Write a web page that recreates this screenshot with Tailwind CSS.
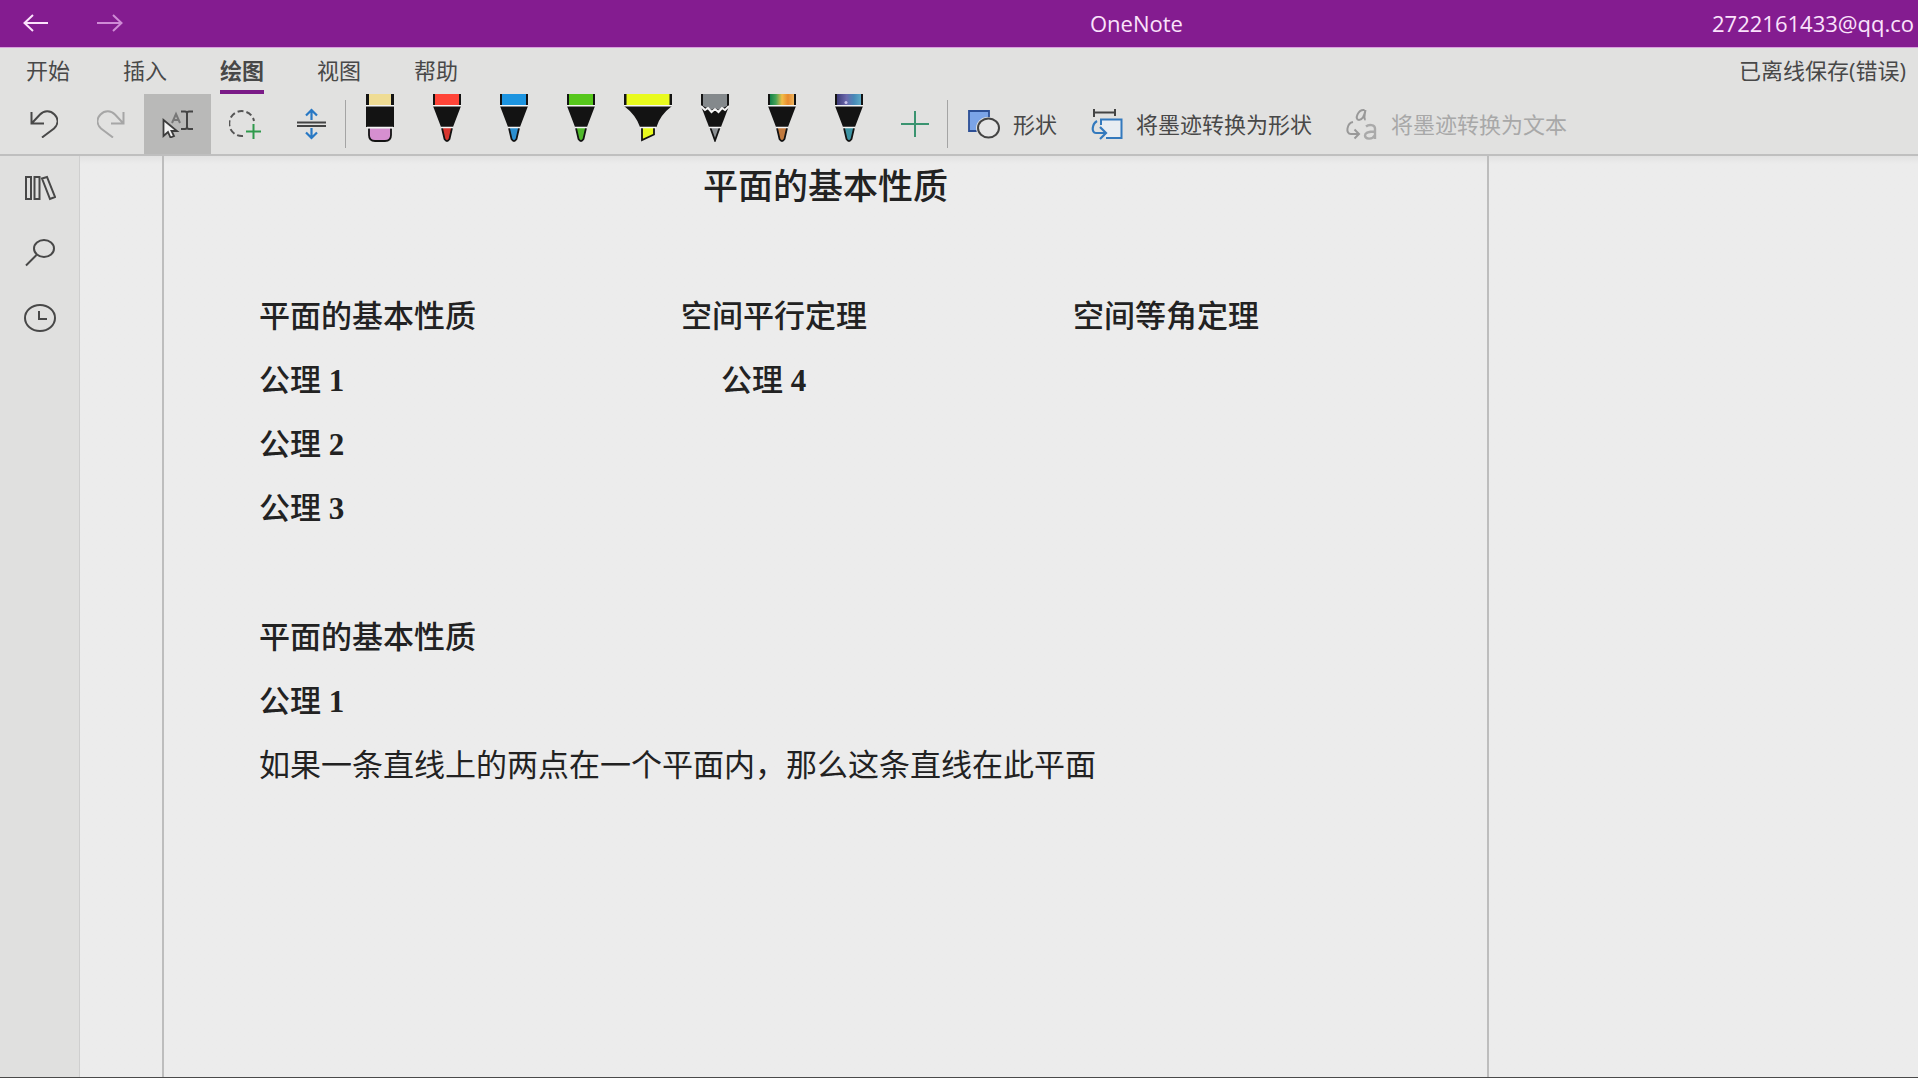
<!DOCTYPE html>
<html lang="zh-CN">
<head>
<meta charset="utf-8">
<title>OneNote</title>
<script src="https://cdn.jsdelivr.net/npm/@tailwindcss/browser@4"></script>
</head>
<body class="flex min-h-screen flex-col overflow-x-hidden bg-[#ececec] font-['Open_Sans','Noto_Sans_CJK_SC',sans-serif] text-[22px] text-[#484848]">

<header class="flex h-12 shrink-0 items-center border-b border-[#d9a0de] bg-[#841c90] pb-[2px] text-[#fbe3fc]">
  <div class="flex w-[1090px] shrink-0 items-center gap-12 pl-[23px]">
    <button aria-label="后退"><svg class="h-5 w-[26px]" viewBox="0 0 26 20" fill="none" stroke="currentColor" stroke-width="2"><path d="M25 10H1.500M10 2L1.500 10L10 18"/></svg></button>
    <button aria-label="前进" class="text-[#cf8bd6]"><svg class="h-5 w-[26px]" viewBox="0 0 26 20" fill="none" stroke="currentColor" stroke-width="2"><path d="M0 10H24.500M16 2L24.500 10L16 18"/></svg></button>
  </div>
  <h1 class="leading-8">OneNote</h1>
  <a href="#" class="mr-1 ml-auto leading-8 whitespace-nowrap">2722161433@qq.co</a>
</header>

<section class="shrink-0 border-b-2 border-[#bfbfbf] bg-[#e1e1e0]">
  <div class="flex h-[46px] items-stretch justify-between pr-3 pl-[26px]">
    <nav class="flex gap-[53px] leading-[44px]">
      <a href="#">开始</a>
      <a href="#">插入</a>
      <a href="#" class="border-b-4 border-[#7a1b87] font-bold">绘图</a>
      <a href="#">视图</a>
      <a href="#">帮助</a>
    </nav>
    <span class="leading-[44px]">已离线保存(错误)</span>
  </div>

  <div class="flex h-[60px] items-center pl-[10px]">
    <button aria-label="撤消" class="flex h-full w-[67px] items-center justify-center"><svg class="h-7 w-7" viewBox="0 0 28 28" fill="none" stroke="#484848" stroke-width="2"><path d="M1.500 2v11.500H14M2 13L10 4.500C14 .5 20 0 24.500 4.500S28 14.500 24 18.500L12 27.500"/></svg></button>
    <button aria-label="恢复" class="flex h-full w-[67px] items-center justify-center"><svg class="h-7 w-7" viewBox="0 0 28 28" fill="none" stroke="#a6a6a6" stroke-width="2"><path d="M26.500 2v11.500H14M26 13L18 4.500C14 .5 8 0 3.500 4.500S0 14.500 4 18.500L16 27.500"/></svg></button>
    <button aria-label="选择对象或键入文本" class="flex h-full w-[67px] items-center justify-center bg-[#b9b9b8]"><svg class="h-7 w-8" viewBox="0 0 32 28" fill="none"><path d="M19 1.500h4q2 0 2 2V17q0 2-2 2h-4M31 1.500h-4q-2 0-2 2V17q0 2 2 2h4" stroke="#444" stroke-width="2"/><path d="M10 13L14 4L18 13M11.500 10h5" stroke="#777" stroke-width="2"/><path d="M1.500 10v16L6 22l2.500 5.500 3.500-1.500L9.500 21H15z" fill="#f2f2f2" stroke="#3c3c3c" stroke-width="1.800"/></svg></button>
    <button aria-label="套索选择" class="flex h-full w-[67px] items-center justify-center"><svg class="h-8 w-8" viewBox="0 0 32 32" fill="none"><path d="M14 28A12.500 12.500 0 1 1 25 13" stroke="#555" stroke-width="2" stroke-dasharray="6 3"/><path d="M17 23.500h15M24.500 16v15" stroke="#2f9a4c" stroke-width="2"/></svg></button>
    <button aria-label="插入空间" class="flex h-full w-[67px] items-center justify-center"><svg class="h-8 w-8" viewBox="0 0 32 32" fill="none"><path d="M1 14.500h29M1 18h29" stroke="#444" stroke-width="2"/><path d="M15.500 12V2M10 7.500L15.500 2L21 7.500M15.500 20v10M10 24.500l5.500 5.500L21 24.500" stroke="#2878c4" stroke-width="2.200"/></svg></button>
    <div class="h-12 w-px shrink-0 bg-[#a4a4a4]"></div>

    <button aria-label="橡皮擦" class="flex h-full w-[67px] items-start justify-center"><svg class="h-12 w-7" viewBox="0 0 28 48"><path d="M0 0h28v11H0zM0 12h28v21H0z" fill="#131313"/><path d="M3 0h22v11H3z" fill="#efdc94"/><path d="M3 34.500V41q0 6 6 6h10q6 0 6-6V34.500" fill="#d68fd0" stroke="#131313" stroke-width="1.800"/><path d="M0 11.700h28M1 33.500h26" stroke="#f5f5f5" stroke-width="1.500"/></svg></button>
    <button aria-label="红色笔" class="flex h-full w-[67px] items-start justify-center"><svg class="h-12 w-7" viewBox="0 0 28 48"><path d="M0 0h28v11H0zM0 12h28L20 33H8z" fill="#131313"/><path d="M2 0h24v11H2z" fill="#ff4438"/><path d="M9 34l2.500 11q2.500 4 5 0L19 34" fill="#d9362f" stroke="#131313" stroke-width="1.800"/><path d="M0 11.700h28M8 33.500h12" stroke="#f5f5f5" stroke-width="1.500"/></svg></button>
    <button aria-label="蓝色笔" class="flex h-full w-[67px] items-start justify-center"><svg class="h-12 w-7" viewBox="0 0 28 48"><path d="M0 0h28v11H0zM0 12h28L20 33H8z" fill="#131313"/><path d="M2 0h24v11H2z" fill="#1c94e0"/><path d="M9 34l2.500 11q2.500 4 5 0L19 34" fill="#2b8fd0" stroke="#131313" stroke-width="1.800"/><path d="M0 11.700h28M8 33.500h12" stroke="#f5f5f5" stroke-width="1.500"/></svg></button>
    <button aria-label="绿色笔" class="flex h-full w-[67px] items-start justify-center"><svg class="h-12 w-7" viewBox="0 0 28 48"><path d="M0 0h28v11H0zM0 12h28L20 33H8z" fill="#131313"/><path d="M2 0h24v11H2z" fill="#56c71c"/><path d="M9 34l2.500 11q2.500 4 5 0L19 34" fill="#50b92c" stroke="#131313" stroke-width="1.800"/><path d="M0 11.700h28M8 33.500h12" stroke="#f5f5f5" stroke-width="1.500"/></svg></button>
    <button aria-label="黄色荧光笔" class="flex h-full w-[67px] items-start justify-center"><svg class="h-12 w-12" viewBox="0 0 48 48"><path d="M0 0h48v11H0zM0 12h48Q36 21 32.500 33H16Q12 21 0 12z" fill="#131313"/><path d="M2.500 0h43v11h-43z" fill="#e9fb1e"/><path d="M18 34v12l12-5.500V34" fill="#e9fb1e" stroke="#131313" stroke-width="1.800"/><path d="M0 11.700h48M16 33.500h16" stroke="#f5f5f5" stroke-width="1.500"/></svg></button>
    <button aria-label="铅笔" class="flex h-full w-[67px] items-start justify-center"><svg class="h-12 w-7" viewBox="0 0 28 48"><path d="M0 0h28v12L20 33H8L0 12z" fill="#131313"/><path d="M2 0h24v12l-4 2-4 2-4-2-4 2-4-2-4-2z" fill="#84898c"/><path d="M0 12l4 4 3-2 3.500 4 3.500-3 3.500 3 3.500-4 3 2 4-4" fill="none" stroke="#f5f5f5" stroke-width="2"/><path d="M9.500 34L14 46.500 18.500 34" fill="#8b8f92" stroke="#131313" stroke-width="1.800"/><path d="M8 33.500h12" stroke="#f5f5f5" stroke-width="1.500"/></svg></button>
    <button aria-label="彩虹笔" class="flex h-full w-[67px] items-start justify-center"><svg class="h-12 w-7" viewBox="0 0 28 48"><defs><linearGradient id="rainbow"><stop offset="0" stop-color="#12804a"/><stop offset=".25" stop-color="#49a556"/><stop offset=".5" stop-color="#f2bd48"/><stop offset=".75" stop-color="#e88a2e"/><stop offset="1" stop-color="#ecb45e"/></linearGradient></defs><path d="M0 0h28v11H0zM0 12h28L20 33H8z" fill="#131313"/><path d="M2 0h24v11H2z" fill="url(#rainbow)"/><path d="M9 34l2.500 11q2.500 4 5 0L19 34" fill="#c27a3e" stroke="#131313" stroke-width="1.800"/><path d="M0 11.700h28M8 33.500h12" stroke="#f5f5f5" stroke-width="1.500"/></svg></button>
    <button aria-label="银河笔" class="flex h-full w-[67px] items-start justify-center"><svg class="h-12 w-7" viewBox="0 0 28 48"><defs><linearGradient id="galaxy"><stop offset="0" stop-color="#3d3b78"/><stop offset=".4" stop-color="#6c69ad"/><stop offset=".7" stop-color="#4788b7"/><stop offset="1" stop-color="#5caac6"/></linearGradient></defs><path d="M0 0h28v11H0zM0 12h28L20 33H8z" fill="#131313"/><path d="M2 0h24v11H2z" fill="url(#galaxy)"/><circle cx="11" cy="8.500" r="1.500" fill="#c9c4ee"/><path d="M9 34l2.500 11q2.500 4 5 0L19 34" fill="#3c93a3" stroke="#131313" stroke-width="1.800"/><path d="M0 11.700h28M8 33.500h12" stroke="#f5f5f5" stroke-width="1.500"/></svg></button>
    <button aria-label="添加笔" class="flex h-full w-[65px] items-center justify-center"><svg class="h-7 w-7" viewBox="0 0 28 28" stroke="#3a9470" stroke-width="2"><path d="M0 14h28M14 1v26"/></svg></button>
    <div class="h-12 w-px shrink-0 bg-[#a4a4a4]"></div>

    <div class="flex h-full items-center gap-[34px] pl-5 whitespace-nowrap">
      <button class="flex items-center gap-[13px]"><svg class="h-8 w-8" viewBox="0 0 32 32"><path d="M1 3h20v20H1z" fill="#7ba4e8" stroke="#2c4f96" stroke-width="1.800"/><ellipse cx="20" cy="20" rx="12" ry="11" fill="#e1e1e0"/><ellipse cx="20.500" cy="20" rx="10.500" ry="9.500" fill="#e6e6e6" stroke="#444" stroke-width="2"/></svg>形状</button>
      <button class="flex items-center gap-[13px]"><svg class="h-8 w-8" viewBox="0 0 32 32" fill="none"><path d="M2 4.500h23M3 1v8M24 1v7" stroke="#444" stroke-width="2"/><path d="M10 17v-5.500h20.500V30H15" fill="#e8edf2" stroke="#3379bd" stroke-width="2"/><path d="M6 13C1 16 0 25 5 25h9M9 19l6 6-6 6" stroke="#3379bd" stroke-width="2.200"/></svg>将墨迹转换为形状</button>
      <button disabled class="flex items-center gap-[13px] text-[#a8a8a8]"><svg class="h-8 w-8" viewBox="0 0 32 32" fill="none" stroke="#999" stroke-width="2"><path d="M18.500 2C12 1 8 12 13 12c3 0 5.500-5 6.500-10-1 5-2 9 0 10M7 14C1 15-1 26 5 26h7M8.500 21.500L13 26l-4.500 4.500"/><path d="M20 18.500c3-2.500 9-2 9 2V31M29 23.500c-5 0-10 .5-10 4s7 5 10-.5" stroke-width="2.400" stroke="#aaa"/></svg>将墨迹转换为文本</button>
    </div>
  </div>
</section>

<div class="flex grow border-b border-[#4a4a4a]">
  <aside class="flex w-20 shrink-0 flex-col items-center gap-[33px] border-r border-[#cfcfcf] bg-[#e0e0df] pt-4">
    <button aria-label="显示笔记本" class="h-8"><svg class="h-8 w-8" viewBox="0 0 32 32" fill="none" stroke="#484848" stroke-width="2"><path d="M2 5h5v22H2zM10.500 5h5v22h-5zM18 6.500L23 5l8 20-5 2z"/></svg></button>
    <button aria-label="搜索" class="h-8"><svg class="h-8 w-8" viewBox="0 0 32 32" fill="none" stroke="#484848" stroke-width="2"><ellipse cx="20" cy="11.500" rx="10" ry="8.500"/><path d="M12.500 18L2 28.500"/></svg></button>
    <button aria-label="最近的笔记" class="h-8"><svg class="h-8 w-8" viewBox="0 0 32 32" fill="none" stroke="#484848" stroke-width="2"><ellipse cx="16" cy="16" rx="15" ry="13"/><path d="M15 9v8h8"/></svg></button>
  </aside>

  <main class="flex grow bg-linear-to-b from-[#e2e2e2] to-[#ececec] to-[8px] pl-[82px]">
    <article class="w-[1327px] border-x-2 border-[#bdbdbd] pb-16 font-['Liberation_Serif','Noto_Sans_CJK_SC',serif] text-[31px] leading-[64px] text-[#222222]">
      <h2 class="mb-[65px] text-center text-[35px] leading-[64px] font-medium">平面的基本性质</h2>
      <div class="grid grid-cols-[422px_392px_1fr] pl-[95px] font-medium">
        <div>
          <h3>平面的基本性质</h3>
          <p>公理 <b>1</b></p>
          <p>公理 <b>2</b></p>
          <p>公理 <b>3</b></p>
        </div>
        <div>
          <h3>空间平行定理</h3>
          <p class="pl-10">公理 <b>4</b></p>
        </div>
        <h3>空间等角定理</h3>
      </div>
      <div class="mt-[65px] pl-[95px]">
        <h3 class="font-medium">平面的基本性质</h3>
        <p class="font-medium">公理 <b>1</b></p>
        <p>如果一条直线上的两点在一个平面内，那么这条直线在此平面</p>
      </div>
    </article>
  </main>
</div>
</body>
</html>
